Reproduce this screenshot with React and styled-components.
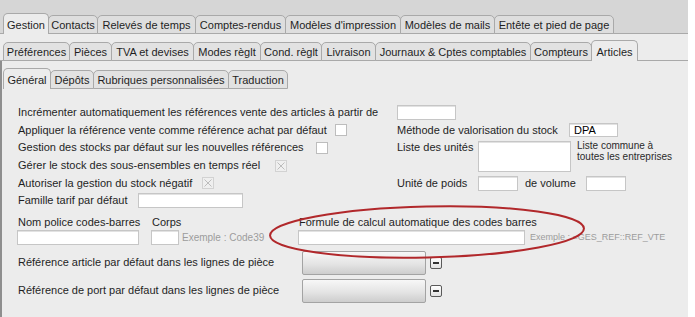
import React from 'react';
import styled, { createGlobalStyle } from 'styled-components';

const Global = createGlobalStyle`
  html, body { margin: 0; padding: 0; background: #ffffff; }
  body {
    font-family: "Liberation Sans", Arial, Helvetica, sans-serif;
    font-size: 11px;
    color: #1f1f1f;
  }
`;

const Window = styled.div`
  position: relative;
  width: 688px;
  height: 317px;
  overflow: hidden;
  background: #ececec;
`;

const TabRow = styled.div`
  box-sizing: border-box;
  display: flex;
  align-items: flex-end;
  height: ${p => p.$h}px;
  padding-left: ${p => p.$pl}px;
  background: ${p => p.$bg};
  box-shadow: ${p => (p.$line ? 'inset 0 -1px 0 #a9a9a9' : 'none')};
`;

const Tab = styled.div`
  box-sizing: border-box;
  display: flex;
  align-items: flex-end;
  justify-content: center;
  width: ${p => p.$w}px;
  flex: none;
  height: ${p => (p.$active ? 21 : 19)}px;
  padding: 0 0 ${p => (p.$active ? 2 : 1)}px;
  margin-right: -1px;
  line-height: 13px;
  white-space: nowrap;
  border: 1px solid #a9a9a9;
  border-bottom: ${p => (p.$active ? 'none' : '1px solid #a9a9a9')};
  border-radius: 5px 5px 0 0;
  background: ${p => (p.$active ? p.$activeBg : p.$bg)};
  position: relative;
  z-index: ${p => (p.$active ? 2 : 1)};
`;

const Body = styled.div`
  border-left: 2px solid #8e8e8e;
  padding-left: 1px;
  height: 256px;
  box-sizing: border-box;
`;

const Form = styled.div`
  padding: 15px 0 0 15px;
`;

const SectionA = styled.div`
  display: flex;
`;

const LeftCol = styled.div`
  width: 379px;
  display: flex;
  flex-direction: column;
`;

const RightCol = styled.div`
  display: flex;
  flex-direction: column;
`;

const Row = styled.div`
  display: flex;
  align-items: ${p => (p.$top ? 'flex-start' : 'center')};
  height: ${p => p.$h || 17.6}px;
  line-height: 13px;
  white-space: nowrap;
`;

const Label = styled.span`
  box-sizing: border-box;
  display: inline-block;
  width: ${p => (p.$w ? `${p.$w}px` : 'auto')};
  flex: none;
  margin-top: ${p => p.$mt || 0}px;
  padding-left: ${p => p.$pl || 0}px;
`;

const TextInput = styled.div`
  box-sizing: border-box;
  flex: none;
  width: ${p => p.$w}px;
  height: ${p => p.$h || 15}px;
  margin-left: ${p => p.$ml || 0}px;
  margin-top: ${p => p.$mt || 0}px;
  background: #ffffff;
  border: 1px solid #c6c6c6;
  box-shadow: inset 0 1px 0 #e2e2e2;
  padding: 0 0 0 4px;
  line-height: 13px;
  font-size: 11px;
  color: #000;
`;

const Box = styled.span`
  box-sizing: border-box;
  display: inline-flex;
  align-items: center;
  justify-content: center;
  flex: none;
  width: 12px;
  height: 12px;
  margin-left: ${p => p.$ml}px;
  background: ${p => (p.$checked ? '#efefef' : '#ffffff')};
  border: 1px solid ${p => (p.$checked ? '#d2d2d2' : '#bdbdbd')};
`;

const Note = styled.div`
  margin-left: 6px;
  font-size: 10px;
  line-height: 11px;
  color: #2a2a2a;
  margin-top: 1px;
`;

const BarcodeRow = styled.div`
  display: flex;
  margin-top: 6px;
  margin-left: -1px;
`;

const Field = styled.div`
  display: flex;
  flex-direction: column;
  width: ${p => (p.$w ? `${p.$w}px` : 'auto')};
  flex: none;
`;

const FieldLabel = styled.div`
  line-height: 13px;
  padding-left: 1px;
  white-space: nowrap;
`;

const FieldLine = styled.div`
  display: flex;
  align-items: center;
  margin-top: 1px;
`;

const Hint = styled.span`
  margin-left: ${p => p.$ml}px;
  font-size: ${p => p.$fs}px;
  color: #9c9c9c;
  white-space: nowrap;
`;

const RefGrid = styled.div`
  display: grid;
  grid-template-columns: 280px 124px 12px;
  grid-auto-rows: 24px;
  column-gap: 4px;
  row-gap: 4px;
  align-items: center;
  margin-top: 6px;
  line-height: 13px;
`;

const SelectBox = styled.div`
  box-sizing: border-box;
  height: 24px;
  border: 1px solid #a3a3a3;
  border-radius: 2px;
  background: linear-gradient(#f7f7f7, #e4e4e4 55%, #cdcdcd);
`;

const MinusButton = styled.div`
  box-sizing: border-box;
  width: 12px;
  height: 12px;
  border: 1px solid #5a5a5a;
  border-radius: 2px;
  background: linear-gradient(#ffffff, #e2e2e2);
  display: flex;
  align-items: center;
  justify-content: center;
  &::after {
    content: '';
    width: 6px;
    height: 2px;
    background: #333;
  }
`;

const Overlay = styled.svg`
  position: absolute;
  left: 0;
  top: 0;
  pointer-events: none;
`;

const Cross = () => (
  <svg width="10" height="10" viewBox="0 0 10 10">
    <path d="M1.5 1.5 L8.5 8.5 M8.5 1.5 L1.5 8.5" stroke="#bcbcbc" strokeWidth="1" fill="none" />
  </svg>
);

const row1 = [
  ['Gestion', 46], ['Contacts', 50], ['Relevés de temps', 99], ['Comptes-rendus', 91],
  ["Modèles d'impression", 116], ['Modèles de mails', 95], ['Entête et pied de page', 120],
];
const row2 = [
  ['Préférences', 67], ['Pièces', 43], ['TVA et devises', 83], ['Modes règlt', 68], ['Cond. règlt', 62],
  ['Livraison', 55], ['Journaux & Cptes comptables', 156], ['Compteurs', 62], ['Articles', 47],
];
const row3 = [['Général', 48], ['Dépôts', 44], ['Rubriques personnalisées', 136], ['Traduction', 60]];

export default function App() {
  return (
    <>
      <Global />
      <Window>
        <TabRow $h={34} $pl={3} $bg="#d6d6d6" $line>
          {row1.map(([t, w]) => (
            <Tab key={t} $w={w} $active={t === 'Gestion'} $bg="#dedede" $activeBg="#ececec">{t}</Tab>
          ))}
        </TabRow>
        <TabRow $h={27} $pl={3} $bg="#ececec" $line>
          {row2.map(([t, w]) => (
            <Tab key={t} $w={w} $active={t === 'Articles'} $bg="#e2e2e2" $activeBg="#ececec">{t}</Tab>
          ))}
        </TabRow>
        <Body>
          <TabRow $h={28} $pl={0} $bg="#ececec">
            {row3.map(([t, w]) => (
              <Tab key={t} $w={w} $active={t === 'Général'} $bg="#e2e2e2" $activeBg="#ececec">{t}</Tab>
            ))}
          </TabRow>
          <Form>
            <SectionA>
              <LeftCol>
                <Row><Label>Incrémenter automatiquement les références vente des articles à partir de</Label></Row>
                <Row><Label>Appliquer la référence vente comme référence achat par défaut</Label><Box $ml={8} /></Row>
                <Row><Label>Gestion des stocks par défaut sur les nouvelles références</Label><Box $ml={12} /></Row>
                <Row><Label>Gérer le stock des sous-ensembles en temps réel</Label><Box $ml={15} $checked><Cross /></Box></Row>
                <Row><Label>Autoriser la gestion du stock négatif</Label><Box $ml={10} $checked><Cross /></Box></Row>
                <Row><Label>Famille tarif par défaut</Label><TextInput $w={105} $ml={11} /></Row>
              </LeftCol>
              <RightCol>
                <Row><TextInput $w={59} /></Row>
                <Row><Label $w={172}>Méthode de valorisation du stock</Label><TextInput $w={49} $h={14}>DPA</TextInput></Row>
                <Row $h={35.2} $top>
                  <Label $w={81} $mt={2}>Liste des unités</Label>
                  <TextInput $w={93} $h={31} $mt={2} />
                  <Note>Liste commune à<br />toutes les entreprises</Note>
                </Row>
                <Row>
                  <Label $w={81}>Unité de poids</Label>
                  <TextInput $w={40} />
                  <Label $w={68} $pl={7}>de volume</Label>
                  <TextInput $w={40} />
                </Row>
              </RightCol>
            </SectionA>
            <BarcodeRow>
              <Field $w={134}>
                <FieldLabel>Nom police codes-barres</FieldLabel>
                <FieldLine><TextInput $w={122} /></FieldLine>
              </Field>
              <Field $w={147}>
                <FieldLabel>Corps</FieldLabel>
                <FieldLine><TextInput $w={28} /><Hint $ml={3} $fs={10}>Exemple : Code39</Hint></FieldLine>
              </Field>
              <Field>
                <FieldLabel>Formule de calcul automatique des codes barres</FieldLabel>
                <FieldLine><TextInput $w={227} /><Hint $ml={5} $fs={9}>Exemple : =GES_REF::REF_VTE</Hint></FieldLine>
              </Field>
            </BarcodeRow>
            <RefGrid>
              <span>Référence article par défaut dans les lignes de pièce</span>
              <SelectBox />
              <MinusButton />
              <span>Référence de port par défaut dans les lignes de pièce</span>
              <SelectBox />
              <MinusButton />
            </RefGrid>
          </Form>
        </Body>
        <Overlay width="688" height="317" viewBox="0 0 688 317">
          <ellipse cx="427" cy="232" rx="157" ry="25.5" transform="rotate(-1.3 427 232)" fill="none" stroke="#b1282b" strokeWidth="2" />
        </Overlay>
      </Window>
    </>
  );
}
